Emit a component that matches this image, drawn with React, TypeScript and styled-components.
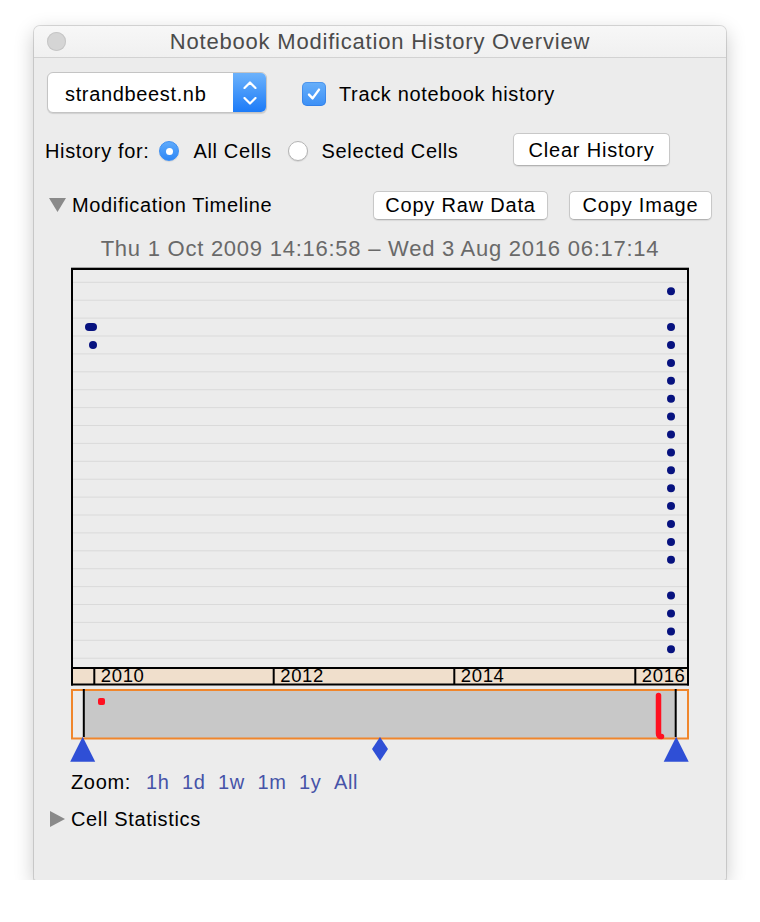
import React from "react";
import styled, { createGlobalStyle } from "styled-components";

const Global = createGlobalStyle`
  html, body { margin: 0; padding: 0; background: #ffffff; }
  body { font-family: "Liberation Sans", Arial, Helvetica, sans-serif; }
`;

const Window = styled.div`
  margin: 26px 0 0 34px;
  width: 692px;
  height: 854px;
  box-sizing: border-box;
  background: #ececec;
  border-radius: 6px 6px 2px 2px;
  box-shadow: 0 0 0 1px rgba(0, 0, 0, 0.13), 0 6px 20px rgba(0, 0, 0, 0.22);
  display: flex;
  flex-direction: column;
  overflow: hidden;
  color: #000;
  font-size: 20px;
  letter-spacing: 0.65px;
`;

const TitleBar = styled.div`
  flex: none;
  height: 31px;
  display: grid;
  grid-template-columns: 1fr auto 1fr;
  align-items: center;
  background: linear-gradient(#f7f7f7, #f0f0f0);
  border-bottom: 1px solid #d2d2d2;
`;

const CloseDot = styled.span`
  margin-left: 13px;
  width: 19px;
  height: 19px;
  border-radius: 50%;
  background: #d5d5d5;
  box-shadow: inset 0 0 0 1px #c6c6c6;
`;

const Title = styled.span`
  font-size: 22px;
  letter-spacing: 0.8px;
  color: #4b4b4b;
  padding-top: 1px;
`;

const Row = styled.div<{ $top: number; $left: number; $right?: number; $h: number }>`
  flex: none;
  display: flex;
  align-items: center;
  margin-top: ${(p) => p.$top}px;
  padding-left: ${(p) => p.$left}px;
  padding-right: ${(p) => p.$right ?? 0}px;
  height: ${(p) => p.$h}px;
  line-height: 24px;
`;

const Popup = styled.div`
  width: 220px;
  height: 41px;
  box-sizing: border-box;
  display: flex;
  background: #fff;
  border: 1px solid #c4c4c4;
  border-radius: 6px;
  box-shadow: 0 1px 1px rgba(0, 0, 0, 0.12);
  overflow: hidden;
`;

const PopupLabel = styled.span`
  flex: 1;
  padding: 2px 0 0 17px;
  display: flex;
  align-items: center;
`;

const Stepper = styled.span`
  width: 33px;
  background: linear-gradient(#6cb2fb, #1c7bf8);
  display: flex;
  flex-direction: column;
  align-items: center;
  justify-content: center;
  gap: 8px;
`;

const Checkbox = styled.span`
  margin-left: 35px;
  margin-top: 2px;
  width: 24px;
  height: 24px;
  border-radius: 5px;
  background: linear-gradient(#68b0fa, #3b8ff6);
  box-shadow: inset 0 0 0 1px rgba(30, 100, 210, 0.35);
  display: flex;
  align-items: center;
  justify-content: center;
`;

const Label = styled.span<{ $gap?: number; $dy?: number }>`
  margin-left: ${(p) => p.$gap ?? 0}px;
  padding-top: ${(p) => p.$dy ?? 0}px;
  white-space: nowrap;
`;

const Radio = styled.span<{ $on?: boolean; $gap: number }>`
  margin-left: ${(p) => p.$gap}px;
  margin-top: 3px;
  width: 20px;
  height: 20px;
  box-sizing: border-box;
  border-radius: 50%;
  display: flex;
  align-items: center;
  justify-content: center;
  background: ${(p) => (p.$on ? "linear-gradient(#5eaafb, #2e87f6)" : "#ffffff")};
  border: 1px solid ${(p) => (p.$on ? "#3c8ef2" : "#b4b4b4")};
  box-shadow: 0 1px 1px rgba(0, 0, 0, 0.1);
  &::after {
    content: "";
    display: ${(p) => (p.$on ? "block" : "none")};
    width: 7px;
    height: 7px;
    border-radius: 50%;
    background: #fff;
  }
`;

const Button = styled.button<{ $w: number; $h: number; $ml?: string }>`
  margin-left: ${(p) => p.$ml ?? "0"};
  width: ${(p) => p.$w}px;
  height: ${(p) => p.$h}px;
  padding: 0;
  box-sizing: border-box;
  background: #ffffff;
  border: 1px solid #c8c8c8;
  border-bottom-color: #b3b3b3;
  border-radius: 5px;
  box-shadow: 0 1px 1px rgba(0, 0, 0, 0.08);
  font-family: "Liberation Sans", Arial, Helvetica, sans-serif;
  font-size: 20px;
  letter-spacing: 0.8px;
  color: #000;
  line-height: 1;
`;

const ButtonGroup = styled.div`
  margin-left: auto;
  display: flex;
  gap: 21px;
`;

const Disclosure = styled.svg`
  flex: none;
  display: block;
`;

const DateLine = styled.div`
  flex: none;
  margin-top: 17px;
  height: 26px;
  line-height: 26px;
  text-align: center;
  font-size: 22px;
  letter-spacing: 0.75px;
  color: #696969;
`;

const Chart = styled.svg`
  flex: none;
  display: block;
  margin: 4px 0 0 36px;
`;

const ZoomLabel = styled.span`
  margin-right: 15px;
`;

const ZoomLinks = styled.div`
  display: flex;
  gap: 12.5px;
`;

const ZoomLink = styled.span`
  color: #4653a8;
`;

const rowY = (r: number) => 25.3 + 17.9 * r;
const rightRows = [0, 2, 3, 4, 5, 6, 7, 8, 9, 10, 11, 12, 13, 14, 15, 17, 18, 19, 20];
const gridLines = Array.from({ length: 22 }, (_, k) => 16.3 + 17.9 * k);
const ticks = [
  { x: 24.3, label: "2010" },
  { x: 203.7, label: "2012" },
  { x: 384.3, label: "2014" },
  { x: 565.3, label: "2016" },
];

function Timeline() {
  const navy = "#07127f";
  const blue = "#2f4fd6";
  return (
    <Chart width={622} height={497} viewBox="0 0 622 497">
      {/* plot frame */}
      <line x1={1} y1={1.5} x2={619} y2={1.5} stroke="#a3a3a3" strokeWidth={1} />
      {gridLines.map((y) => (
        <line key={y} x1={3} y1={y} x2={617} y2={y} stroke="#dadada" strokeWidth={1} />
      ))}
      <rect x={2} y={3} width={616} height={399} fill="none" stroke="#000" strokeWidth={2} />
      {rightRows.map((r) => (
        <circle key={r} cx={601} cy={rowY(r)} r={4} fill={navy} />
      ))}
      <rect x={15} y={rowY(2) - 4} width={12} height={8} rx={4} fill={navy} />
      <circle cx={23} cy={rowY(3)} r={4} fill={navy} />

      {/* axis band */}
      <rect x={2} y={403} width={616} height={15} fill="#f0dfcc" />
      <line x1={1} y1={402} x2={619} y2={402} stroke="#000" strokeWidth={2} />
      <line x1={1} y1={418.5} x2={619} y2={418.5} stroke="#000" strokeWidth={2} />
      <line x1={2} y1={402} x2={2} y2={419.5} stroke="#000" strokeWidth={2} />
      <line x1={618} y1={402} x2={618} y2={419.5} stroke="#000" strokeWidth={2} />
      {ticks.map((t) => (
        <g key={t.label}>
          <line x1={t.x} y1={402} x2={t.x} y2={418} stroke="#000" strokeWidth={2} />
          <text
            x={t.x + 6.5}
            y={415.5}
            fontFamily='"Liberation Sans", Arial, sans-serif'
            fontSize={18.5}
            fill="#000"
          >
            {t.label}
          </text>
        </g>
      ))}

      {/* overview strip */}
      <rect x={14} y={424} width={592} height={48} fill="#c8c8c8" />
      <rect x={2} y={424} width={616} height={48.5} fill="none" stroke="#f0862c" strokeWidth={2} />
      <line x1={13.8} y1={423} x2={13.8} y2={471} stroke="#000" strokeWidth={2} />
      <line x1={605.7} y1={423} x2={605.7} y2={471} stroke="#000" strokeWidth={2} />
      <rect x={28} y={432} width={7} height={7} rx={2} fill="#ff1020" />
      <path
        d="M588.5 429.5 V467.5 Q588.5 470.5 591.5 470.5"
        fill="none"
        stroke="#ff1020"
        strokeWidth={5.5}
        strokeLinecap="round"
      />

      {/* range handles */}
      <polygon points="12.7,470.7 25.2,495.7 0.2,495.7" fill={blue} />
      <polygon points="606.2,470.7 618.7,495.7 593.7,495.7" fill={blue} />
      <polygon points="310,471 318,483 310,495 302,483" fill={blue} />
    </Chart>
  );
}

export default function App() {
  return (
    <>
      <Global />
      <Window>
        <TitleBar>
          <CloseDot />
          <Title>Notebook Modification History Overview</Title>
          <span />
        </TitleBar>

        <Row $top={14} $left={13} $h={41}>
          <Popup>
            <PopupLabel>strandbeest.nb</PopupLabel>
            <Stepper>
              <svg width={14} height={8} viewBox="0 0 14 8">
                <path d="M1.5 7 L7 1.5 L12.5 7" fill="none" stroke="#fff" strokeWidth={2.2} strokeLinecap="round" strokeLinejoin="round" />
              </svg>
              <svg width={14} height={8} viewBox="0 0 14 8">
                <path d="M1.5 1 L7 6.5 L12.5 1" fill="none" stroke="#fff" strokeWidth={2.2} strokeLinecap="round" strokeLinejoin="round" />
              </svg>
            </Stepper>
          </Popup>
          <Checkbox>
            <svg width={16} height={16} viewBox="0 0 16 16">
              <path d="M3 8.6 L6.6 12.4 L13 3.6" fill="none" stroke="#fff" strokeWidth={2.4} strokeLinecap="round" strokeLinejoin="round" />
            </svg>
          </Checkbox>
          <Label $gap={13} $dy={3}>Track notebook history</Label>
        </Row>

        <Row $top={20} $left={11} $right={56} $h={33}>
          <Label $dy={3}>History for:</Label>
          <Radio $on $gap={10} />
          <Label $gap={14} $dy={3}>All Cells</Label>
          <Radio $gap={16} />
          <Label $gap={14} $dy={3}>Selected Cells</Label>
          <Button $w={157} $h={33} $ml="auto">Clear History</Button>
        </Row>

        <Row $top={25} $left={15} $right={14} $h={28}>
          <Disclosure width={17} height={14} viewBox="0 0 17 14">
            <polygon points="0,0 17,0 8.5,14" fill="#8a8a8a" />
          </Disclosure>
          <Label $gap={6}>Modification Timeline</Label>
          <ButtonGroup>
            <Button $w={175} $h={29}>Copy Raw Data</Button>
            <Button $w={143} $h={29}>Copy Image</Button>
          </ButtonGroup>
        </Row>

        <DateLine>Thu 1 Oct 2009 14:16:58 – Wed 3 Aug 2016 06:17:14</DateLine>

        <Timeline />

        <Row $top={7} $left={37} $h={24}>
          <ZoomLabel>Zoom:</ZoomLabel>
          <ZoomLinks>
            {["1h", "1d", "1w", "1m", "1y", "All"].map((z) => (
              <ZoomLink key={z}>{z}</ZoomLink>
            ))}
          </ZoomLinks>
        </Row>

        <Row $top={13} $left={16} $h={24}>
          <Disclosure width={15} height={16} viewBox="0 0 15 16">
            <polygon points="0,0 15,8 0,16" fill="#8a8a8a" />
          </Disclosure>
          <Label $gap={6}>Cell Statistics</Label>
        </Row>
      </Window>
    </>
  );
}
